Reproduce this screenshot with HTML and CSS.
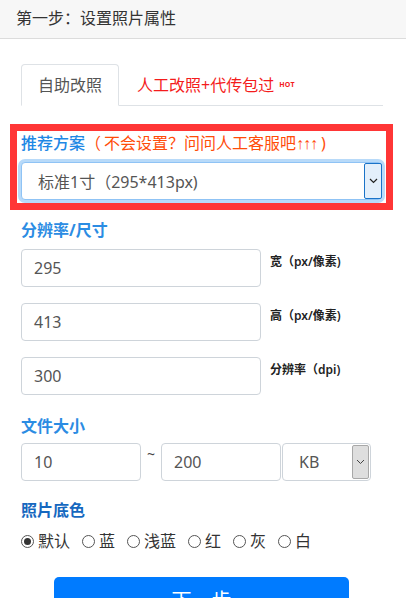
FILE: index.html
```html
<!DOCTYPE html>
<html lang="zh-CN">
<head>
<meta charset="utf-8">
<title>设置照片属性</title>
<link rel="stylesheet" href="styles.css">
</head>
<body>
<div class="header">第一步：设置照片属性</div>
<div class="content">
  <div class="tabs">
    <div class="tab active">自助改照</div>
    <div class="tab hot-tab">人工改照+代传包过<span class="hot">HOT</span></div>
  </div>

  <div class="recommend">
    <div class="rec-label"><span class="blue">推荐方案</span><span class="orange">（<span class="gap"></span>不会设置？问问人工客服吧<span class="arrows">↑↑↑</span>)</span></div>
    <div class="select focus">
      <span class="select-text">标准1寸（295*413px)</span>
      <span class="select-btn blue-btn">
        <svg width="9" height="6" viewBox="0 0 9 6"><path d="M1 1 L4.5 4.5 L8 1" fill="none" stroke="#222" stroke-width="1.2"/></svg>
      </span>
    </div>
  </div>

  <div class="section-title">分辨率/尺寸</div>
  <div class="field-row">
    <div class="input wide">295</div>
    <div class="side-label">宽（px/像素)</div>
  </div>
  <div class="field-row">
    <div class="input wide">413</div>
    <div class="side-label">高（px/像素)</div>
  </div>
  <div class="field-row">
    <div class="input wide">300</div>
    <div class="side-label">分辨率（dpi)</div>
  </div>

  <div class="section-title t2">文件大小</div>
  <div class="size-row">
    <div class="input small">10</div>
    <div class="tilde">~</div>
    <div class="input small2">200</div>
    <div class="select unit">
      <span class="select-text">KB</span>
      <span class="select-btn grey-btn">
        <svg width="9" height="6" viewBox="0 0 9 6"><path d="M1 1 L4.5 4.5 L8 1" fill="none" stroke="#444" stroke-width="1"/></svg>
      </span>
    </div>
  </div>

  <div class="section-title t3">照片底色</div>
  <div class="radios">
    <label class="radio"><span class="circle checked"></span>默认</label>
    <label class="radio"><span class="circle"></span>蓝</label>
    <label class="radio"><span class="circle"></span>浅蓝</label>
    <label class="radio"><span class="circle"></span>红</label>
    <label class="radio"><span class="circle"></span>灰</label>
    <label class="radio"><span class="circle"></span>白</label>
  </div>

  <div class="btn-wrap"><div class="next-btn">下一步</div></div>
</div>
</body>
</html>
```

FILE: styles.css
```css
* { box-sizing: border-box; }
html, body { margin: 0; padding: 0; }
body {
  width: 406px;
  height: 598px;
  overflow: hidden;
  background: #fff;
  font-family: "Noto Sans", "Noto Sans CJK SC", sans-serif;
  font-size: 16px;
  color: #333;
}
.header {
  height: 39px;
  background: #f7f7f7;
  border-bottom: 1px solid #dcdcdc;
  padding-left: 16px;
  line-height: 36px;
  font-size: 16px;
  color: #333;
}
.content {
  padding: 25px 23px 0 21px;
}
.tabs {
  display: flex;
  border-bottom: 1px solid #dee2e6;
  height: 42px;
}
.tab {
  height: 42px;
  padding: 0 16px;
  line-height: 40px;
  font-size: 16px;
  border: 1px solid transparent;
  border-radius: 4px 4px 0 0;
}
.tab.active {
  color: #555;
  border-color: #dee2e6;
  border-bottom-color: #fff;
  background: #fff;
}
.hot-tab {
  color: #f41c1c;
  padding-left: 17px;
}
.hot {
  font-size: 7px;
  font-weight: bold;
  margin-left: 5px;
  position: relative;
  top: -4px;
  letter-spacing: 0.3px;
}
.recommend {
  margin: 18px -10px 0 -11px;
  border: 7px solid #ff3636;
  padding: 0 4px 3px 4px;
}
.rec-label {
  line-height: 24px;
  font-size: 16px;
}
.blue { color: #1e88e5; font-weight: 500; }
.orange { color: #ff4d0a; }
.gap { display: inline-block; width: 3px; }
.arrows {
  font-family: "Liberation Sans", sans-serif;
  font-size: 16px;
  letter-spacing: -1px;
  margin-right: 4px;
}
.select {
  position: relative;
  display: flex;
  align-items: center;
  height: 38px;
  border: 1px solid #ced4da;
  border-radius: 4px;
  background: #fff;
  color: #555;
}
.select.focus {
  margin-top: 6px;
  border-color: #8fc3f5;
  box-shadow: 0 0 0 3px #b8daf9;
  padding-left: 16px;
}
.select-text { flex: 1; }
.select-btn {
  height: 100%;
  display: flex;
  align-items: center;
  justify-content: center;
}
.blue-btn {
  width: 18px;
  background: #e3effb;
  border: 1px solid #1a73c8;
  border-radius: 2px;
  margin-right: -1px;
}
.section-title {
  margin-top: 8px;
  line-height: 24px;
  font-size: 16px;
  font-weight: bold;
  color: #2b8ce3;
}
.section-title.t2 { margin-top: 19px; }
.section-title.t3 { margin-top: 17px; color: #1668bf; }
.field-row {
  display: flex;
  align-items: flex-start;
  margin-top: 7px;
}
.field-row + .field-row { margin-top: 16px; }
.input {
  height: 38px;
  border: 1px solid #ced4da;
  border-radius: 4px;
  padding-left: 12px;
  line-height: 36px;
  font-size: 16px;
  color: #555;
  background: #fff;
}
.input.wide { width: 240px; }
.side-label {
  margin-left: 9px;
  padding-top: 5px;
  font-size: 12px;
  font-weight: 600;
  color: #222;
  line-height: 16px;
}
.size-row {
  display: flex;
  align-items: flex-start;
  margin-top: 5px;
}
.input.small { width: 120px; }
.tilde {
  width: 20px;
  text-align: center;
  font-size: 14px;
  line-height: 20px;
  color: #444;
  padding-top: 1px;
}
.input.small2 { width: 120px; }
.select.unit {
  width: 89px;
  margin-left: 1px;
  padding-left: 16px;
}
.grey-btn {
  width: 17px;
  background: #dedede;
  border: 1px solid #a8a8a8;
  border-radius: 2px;
  height: 34px;
  margin-right: 1px;
}
.radios {
  display: flex;
  margin-top: 7px;
  line-height: 24px;
  font-size: 16px;
  color: #333;
}
.radio {
  display: flex;
  align-items: center;
  margin-right: 12px;
}
.circle {
  width: 13px;
  height: 13px;
  border: 1px solid #555;
  border-radius: 50%;
  margin-right: 4px;
  position: relative;
}
.circle.checked::after {
  content: "";
  position: absolute;
  left: 2px;
  top: 2px;
  width: 7px;
  height: 7px;
  border-radius: 50%;
  background: #333;
}
.btn-wrap {
  margin-top: 24px;
  padding-left: 33px;
}
.next-btn {
  width: 295px;
  height: 48px;
  background: #007bff;
  border-radius: 5px;
  color: #fff;
  font-size: 20px;
  text-align: center;
  line-height: 48px;
}
```
